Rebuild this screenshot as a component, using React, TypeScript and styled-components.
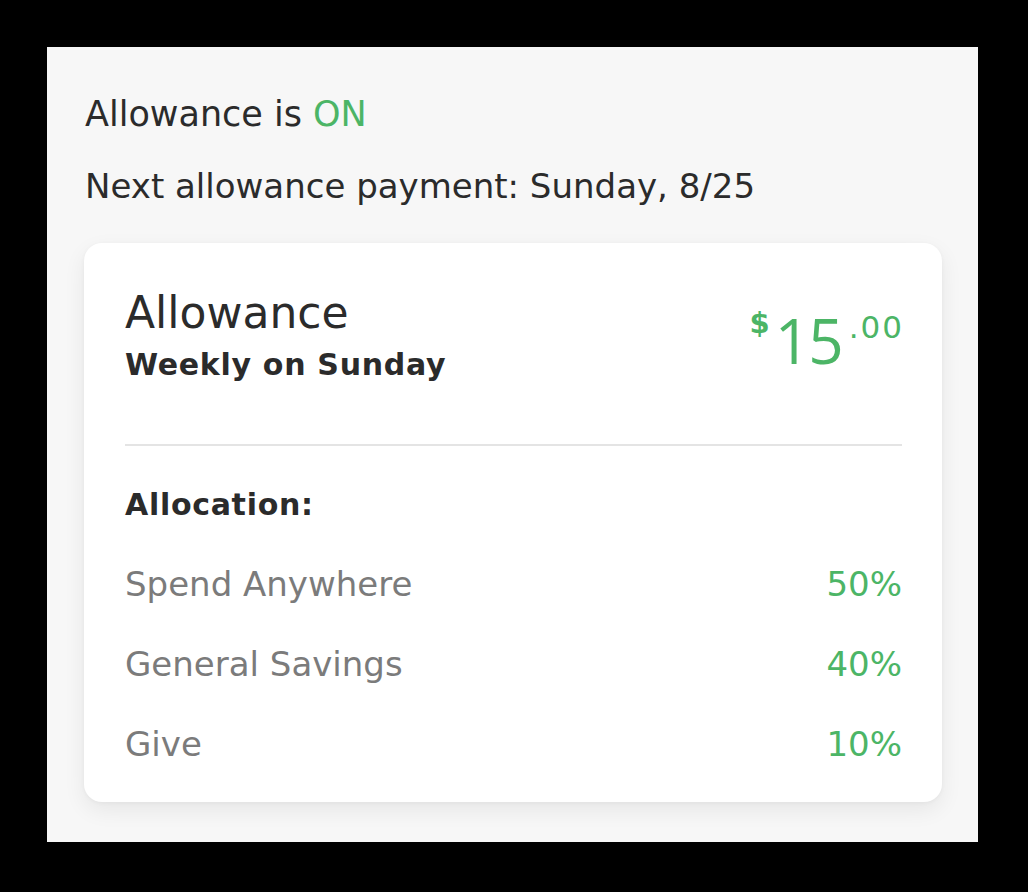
import React from "react";
import styled, { createGlobalStyle } from "styled-components";

const GlobalStyle = createGlobalStyle`
  html, body {
    margin: 0;
    padding: 0;
    background: #000;
  }
  body {
    font-family: "DejaVu Sans", "Open Sans", Arial, sans-serif;
    -webkit-font-smoothing: antialiased;
  }
`;

const Stage = styled.div`
  width: 1028px;
  height: 892px;
  background: #000;
  padding: 47px 50px 50px 47px;
  box-sizing: border-box;
`;

const Panel = styled.div`
  width: 931px;
  height: 795px;
  background: #f7f7f7;
  box-sizing: border-box;
  padding: 47px 36px 0 37px;
  display: flex;
  flex-direction: column;
`;

const StatusLine = styled.div<{ $size?: number }>`
  font-size: ${(p) => p.$size ?? 34}px;
  line-height: 40px;
  color: #2b2b2b;
  padding-left: 1px;
  & + & {
    margin-top: 32px;
  }
`;

const Green = styled.span`
  color: #4cb566;
`;

const Card = styled.div`
  margin-top: 37px;
  width: 858px;
  height: 559px;
  box-sizing: border-box;
  background: #fff;
  border-radius: 18px;
  box-shadow: 0 8px 22px rgba(0, 0, 0, 0.07), 0 1px 4px rgba(0, 0, 0, 0.04);
  padding: 45px 40px 40px 41px;
  display: flex;
  flex-direction: column;
`;

const Header = styled.div`
  display: flex;
  justify-content: space-between;
  align-items: flex-start;
`;

const TitleBlock = styled.div`
  display: flex;
  flex-direction: column;
`;

const Title = styled.div`
  font-size: 44px;
  line-height: 50px;
  color: #2b2b2b;
`;

const Subtitle = styled.div`
  margin-top: 9px;
  font-size: 30px;
  line-height: 36px;
  font-weight: 700;
  letter-spacing: 0.7px;
  color: #2b2b2b;
`;

const Amount = styled.div`
  margin-top: 21px;
  display: flex;
  align-items: flex-start;
  color: #4cb566;
`;

const Dollar = styled.span`
  font-size: 29px;
  line-height: 29px;
  font-weight: 700;
  margin-top: 0px;
`;

const Big = styled.span`
  font-family: "Open Sans", "DejaVu Sans", sans-serif;
  font-size: 62px;
  line-height: 62px;
  letter-spacing: -2px;
  margin: 0 7px 0 5px;
`;

const Cents = styled.span`
  font-size: 31px;
  line-height: 31px;
  letter-spacing: 2px;
  margin-right: -2px;
  margin-top: 3px;
`;

const Divider = styled.div`
  margin-top: 61px;
  height: 2px;
  background: #e4e4e4;
`;

const SectionLabel = styled.div`
  margin-top: 41px;
  font-size: 30px;
  line-height: 36px;
  font-weight: 700;
  letter-spacing: 0.7px;
  color: #2b2b2b;
`;

const List = styled.div`
  margin-top: 43px;
  display: flex;
  flex-direction: column;
  gap: 44px;
`;

const Row = styled.div`
  display: flex;
  justify-content: space-between;
  font-size: 34px;
  line-height: 36px;
`;

const RowLabel = styled.span`
  color: #7b7b7b;
`;

const RowValue = styled.span`
  color: #4cb566;
`;

const allocations = [
  { label: "Spend Anywhere", value: "50%" },
  { label: "General Savings", value: "40%" },
  { label: "Give", value: "10%" },
];

export default function App() {
  return (
    <>
      <GlobalStyle />
      <Stage>
        <Panel>
          <StatusLine $size={35}>
            Allowance is <Green>ON</Green>
          </StatusLine>
          <StatusLine>Next allowance payment: Sunday, 8/25</StatusLine>
          <Card>
            <Header>
              <TitleBlock>
                <Title>Allowance</Title>
                <Subtitle>Weekly on Sunday</Subtitle>
              </TitleBlock>
              <Amount>
                <Dollar>$</Dollar>
                <Big>15</Big>
                <Cents>.00</Cents>
              </Amount>
            </Header>
            <Divider />
            <SectionLabel>Allocation:</SectionLabel>
            <List>
              {allocations.map((a) => (
                <Row key={a.label}>
                  <RowLabel>{a.label}</RowLabel>
                  <RowValue>{a.value}</RowValue>
                </Row>
              ))}
            </List>
          </Card>
        </Panel>
      </Stage>
    </>
  );
}
